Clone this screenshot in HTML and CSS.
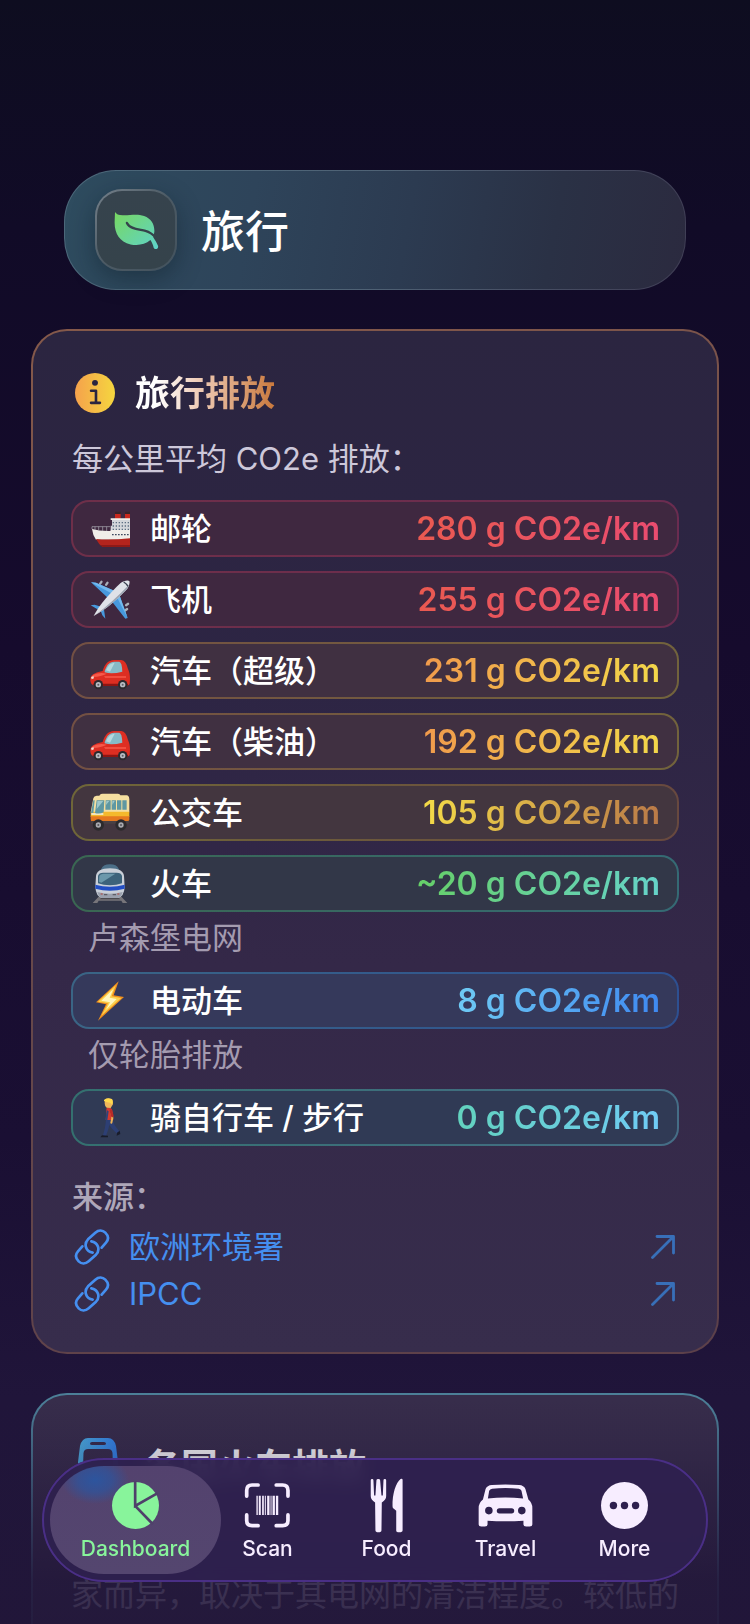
FILE: index.html
```html
<!DOCTYPE html>
<html lang="zh-CN">
<head>
<meta charset="utf-8">
<meta name="viewport" content="width=device-width, initial-scale=1">
<title>旅行</title>
<link rel="stylesheet" href="styles.css">
</head>
<body>
<div class="app">
  <main class="content">
    <header class="hero">
      <span class="hero-icon">
        <svg class="leaf" viewBox="190 183 136 118" aria-hidden="true">
          <defs><linearGradient id="leafFill" x1="0" y1="0" x2="1" y2="1"><stop offset="0" stop-color="#78d860"/><stop offset="1" stop-color="#5ed3cb"/></linearGradient></defs>
          <path fill="url(#leafFill)" d="M193 186C196 192 204 196 216 196C238 197 258 190 281 198C303 206 313 224 312 246L309 263C314 270 320 280 323 288C326 298 314 302 310 294C308 286 305 278 300 271C284 285 262 288 240 284C205 275 190 248 192 212Z"/>
          <path d="M229 219C238 238 266 238 285 243C300 247 308 254 317 264" fill="none" stroke="#35434b" stroke-width="7" stroke-linecap="round"/>
        </svg>
      </span>
      <h1 class="hero-title">旅行</h1>
    </header>

    <section class="card card-travel">
      <div class="card-head">
        <svg class="info" viewBox="165 158 122 122" aria-hidden="true">
          <defs><linearGradient id="infoFill"><stop offset="0" stop-color="#f5a24c"/><stop offset="1" stop-color="#f5d63f"/></linearGradient></defs>
          <circle cx="226" cy="219" r="61" fill="url(#infoFill)"/>
          <circle cx="226" cy="188" r="9" fill="#2b2540"/>
          <path d="M214 212H229V248M214 249H241" fill="none" stroke="#2b2540" stroke-width="8" stroke-linecap="round" stroke-linejoin="round"/>
        </svg>
        <h2 class="card-title title-warm">旅行排放</h2>
      </div>
      <p class="lead">每公里平均 CO2e 排放：</p>

      <ul class="rows">
        <li>
          <div class="row red">
            <svg class="emoji" viewBox="0 0 120 120" aria-hidden="true">
              <path fill="#c8281e" d="M75 14H92V34H75ZM105 14H120V34H105Z"/><path fill="#3a2428" d="M75 8H92V15H75ZM105 8H120V15H105Z"/>
              <path fill="#d3d6da" d="M66 30H121V70H62V50H66Z"/><path fill="#f0eee9" d="M62 28H121V33H62ZM6 60Q30 67 62 66V62H121V92H18Q8 78 6 60Z"/>
              <path fill="#b3241d" d="M18 90Q60 94 121 88V114H38Q26 106 18 90Z"/><path fill="#8d1a18" d="M30 108H121V114H38Z"/>
              <path stroke="#5d6f83" stroke-width="4" stroke-dasharray="4 5" d="M68 41H118M68 51H118M68 61H118"/><path stroke="#3f4c60" stroke-width="4" stroke-dasharray="5 4" d="M66 77H118"/>
              <path stroke="#aeb1b8" stroke-width="2" fill="none" d="M6 60V53H60M15 53V63M26 53V65M38 53V66M50 53V66"/>
            </svg>
            <span class="name">邮轮</span><span class="value">280 g CO2e/km</span>
          </div>
        </li>
        <li>
          <div class="row red">
            <svg class="emoji" viewBox="0 0 120 120" aria-hidden="true">
              <g fill="#a9b1ba"><rect x="29" y="1" width="7" height="14" rx="3" transform="rotate(35 32 8)"/><rect x="47" y="4" width="7" height="14" rx="3" transform="rotate(35 50 11)"/><rect x="108" y="66" width="7" height="14" rx="3" transform="rotate(55 111 73)"/><rect x="105" y="82" width="7" height="14" rx="3" transform="rotate(55 108 89)"/></g>
              <path fill="#4799dd" d="M3 7L18 8L76 34L58 58ZM113 114L106 116L64 62L88 44ZM2 76L14 74L38 82L30 92ZM46 116L37 106L32 92L41 82Z"/>
              <path fill="#72b9ee" d="M3 7L18 8L76 34L68 42ZM113 114L88 44L80 50Z"/>
              <path fill="#dfe2e8" d="M11 108C28 74 62 38 91 10C101 1 115 0 118 3C120 7 118 20 108 31C80 60 48 88 11 108Z"/>
              <path fill="#9da5b2" d="M11 108C48 82 88 44 117 14C115 21 113 26 108 31C80 60 48 88 11 108Z"/>
              <path fill="none" stroke="#3a4150" stroke-width="4" d="M101 6Q109 11 114 19"/>
            </svg>
            <span class="name">飞机</span><span class="value">255 g CO2e/km</span>
          </div>
        </li>
        <li>
          <div class="row orange">
            <svg class="emoji" viewBox="0 0 120 120" aria-hidden="true">
              <path fill="#dd2e22" d="M1 88C0 74 8 66 38 60C44 40 54 28 72 27H94Q108 28 114 54C120 66 121 80 119 98Q118 103 108 103H12Q2 101 1 88Z"/>
              <path fill="#86bac6" d="M44 60C50 42 58 33 72 32H88Q96 34 97 62Q66 70 44 64Z"/><path fill="#b5d9dd" d="M48 58C54 43 62 36 74 35L60 62Z"/>
              <path fill="#f7594a" d="M8 72Q30 62 50 68Q34 76 9 78ZM42 76H108V80H46Z"/><path fill="#8e1512" d="M8 98H114V105H14Z"/>
              <path fill="#f2ddd4" d="M3 78L10 75L12 82L5 85Z"/>
              <circle cx="25" cy="101" r="14" fill="#2b292d"/><circle cx="98" cy="101" r="14" fill="#2b292d"/><circle cx="25" cy="101" r="8" fill="#b9bcc2"/><circle cx="98" cy="101" r="8" fill="#b9bcc2"/><circle cx="25" cy="101" r="3" fill="#5c5e66"/><circle cx="98" cy="101" r="3" fill="#5c5e66"/>
            </svg>
            <span class="name">汽车（超级）</span><span class="value">231 g CO2e/km</span>
          </div>
        </li>
        <li>
          <div class="row orange">
            <svg class="emoji" viewBox="0 0 120 120" aria-hidden="true">
              <path fill="#dd2e22" d="M1 88C0 74 8 66 38 60C44 40 54 28 72 27H94Q108 28 114 54C120 66 121 80 119 98Q118 103 108 103H12Q2 101 1 88Z"/>
              <path fill="#86bac6" d="M44 60C50 42 58 33 72 32H88Q96 34 97 62Q66 70 44 64Z"/><path fill="#b5d9dd" d="M48 58C54 43 62 36 74 35L60 62Z"/>
              <path fill="#f7594a" d="M8 72Q30 62 50 68Q34 76 9 78ZM42 76H108V80H46Z"/><path fill="#8e1512" d="M8 98H114V105H14Z"/>
              <path fill="#f2ddd4" d="M3 78L10 75L12 82L5 85Z"/>
              <circle cx="25" cy="101" r="14" fill="#2b292d"/><circle cx="98" cy="101" r="14" fill="#2b292d"/><circle cx="25" cy="101" r="8" fill="#b9bcc2"/><circle cx="98" cy="101" r="8" fill="#b9bcc2"/><circle cx="25" cy="101" r="3" fill="#5c5e66"/><circle cx="98" cy="101" r="3" fill="#5c5e66"/>
            </svg>
            <span class="name">汽车（柴油）</span><span class="value">192 g CO2e/km</span>
          </div>
        </li>
        <li>
          <div class="row yellow">
            <svg class="emoji" viewBox="0 0 120 120" aria-hidden="true">
              <path fill="#f5dfa0" d="M30 5Q32 2 38 2H84Q90 2 91 7H110Q117 8 118 18V58H2L10 16Q12 9 20 8H28Z"/>
              <path fill="#f4b92c" d="M2 56H118V72H2Z"/><path fill="#e5791f" d="M2 70H118V80Q116 86 110 86H6Q2 84 2 78Z"/><path fill="#f3e6bd" d="M4 60H40V66H4Z"/>
              <path fill="#5f98a2" d="M10 22H14L10 60H3ZM20 22H43L41 58Q28 64 15 60ZM47 22H62V50H46ZM65 22H78V50H65ZM81 22H94V50H81ZM97 22H110V50H97Z"/>
              <path fill="#9ec7ca" d="M22 24H40L20 48ZM49 24H58L48 36ZM67 24H74L67 36Z"/>
              <path fill="#4a4144" d="M4 84H116V92H4Z"/>
              <circle cx="25" cy="96" r="17" fill="#2c2a2d"/><circle cx="93" cy="96" r="17" fill="#2c2a2d"/><circle cx="25" cy="96" r="8" fill="#a9a9ae"/><circle cx="93" cy="96" r="8" fill="#a9a9ae"/><circle cx="25" cy="96" r="3" fill="#55555c"/><circle cx="93" cy="96" r="3" fill="#55555c"/>
            </svg>
            <span class="name">公交车</span><span class="value">105 g CO2e/km</span>
          </div>
        </li>
        <li>
          <div class="row green">
            <svg class="emoji" viewBox="0 0 120 120" aria-hidden="true">
              <path fill="#77757a" d="M28 96H92L112 117H98L94 110H26L22 117H8Z"/><path fill="#4a494e" d="M34 100H86L90 106H30Z"/>
              <path fill="#4c6f88" d="M34 14Q40 1 60 1Q80 1 86 14L92 28H28Z"/><path fill="#c9cfd8" d="M18 36Q20 14 60 13Q100 14 102 36L104 70Q102 98 84 102H36Q18 98 16 70Z"/>
              <path fill="#3d637b" d="M24 36Q26 26 40 26H80Q94 26 96 36V58Q80 64 60 64Q40 64 24 58Z"/><path fill="#6c98ab" d="M28 36Q30 30 40 29H76L34 56L27 53Z"/>
              <path fill="#234fc4" d="M16 62Q60 74 104 62V74Q60 86 16 74Z"/><path fill="#9aa0ad" d="M22 84Q60 94 98 84Q94 100 84 102H36Q26 100 22 84Z"/>
              <path stroke="#5e5d66" stroke-width="4" d="M42 92H52M68 92H78"/><path stroke="#b5423a" stroke-width="3" d="M32 90H38M82 90H88"/>
            </svg>
            <span class="name">火车</span><span class="value">~20 g CO2e/km</span>
          </div>
          <p class="note">卢森堡电网</p>
        </li>
        <li>
          <div class="row blue">
            <svg class="emoji" viewBox="0 0 120 120" aria-hidden="true">
              <path fill="#f08f1c" d="M86 1L18 64L48 70L24 119L102 48L71 43Z"/><path fill="#fbd24e" d="M78 12L24 62L54 67L34 104L94 51L65 46Z"/><path fill="#fff6bd" d="M70 24L34 59L60 64L48 86L80 54L59 50Z"/>
            </svg>
            <span class="name">电动车</span><span class="value">8 g CO2e/km</span>
          </div>
          <p class="note">仅轮胎排放</p>
        </li>
        <li>
          <div class="row teal">
            <svg class="emoji" viewBox="0 0 120 120" aria-hidden="true">
              <path fill="#2d3f74" d="M48 66L68 64C70 78 76 86 90 102L82 108C70 96 62 88 58 80C56 94 50 106 48 114L38 113C44 98 46 84 48 66Z"/>
              <path fill="#191c2a" d="M81 104L89 98L91 108L80 113ZM36 112L54 113V118H31Z"/>
              <path fill="#d33a30" d="M50 30Q60 26 66 34L70 66H47Q50 50 48 40Z"/><path fill="#2f4378" d="M50 36L46 66L52 67L56 40Z"/>
              <path fill="#f0b75a" d="M44 5Q52 -2 66 4Q70 10 68 20L62 30L50 29Q44 24 44 16Z"/><path fill="#ffd94d" d="M42 6Q50 -3 66 3Q70 10 67 20L60 14Q52 14 42 9Z"/>
              <path stroke="#eeb254" stroke-width="6" stroke-linecap="round" fill="none" d="M65 46L67 60L64 74"/><path stroke="#b92a27" stroke-width="8" stroke-linecap="round" fill="none" d="M63 38L67 54"/>
            </svg>
            <span class="name">骑自行车 / 步行</span><span class="value">0 g CO2e/km</span>
          </div>
        </li>
      </ul>

      <h3 class="sources-title">来源：</h3>
      <ul class="links">
        <li><a class="link" href="#eea">
          <svg class="chain" viewBox="162 208 108 108" aria-hidden="true"><path d="M218 279C198 276 190 254 204 239L226 219C236 210 248 211 256 219C266 229 266 240 258 249L245 264M214 245C234 248 242 270 228 285L206 305C196 314 184 313 176 305C166 295 166 284 174 275L187 260"/></svg>
          <span>欧洲环境署</span>
          <svg class="arrow" viewBox="0 0 24 24" aria-hidden="true"><path d="M1.500 22.500L22 2M6 1.500H22.500V18"/></svg>
        </a></li>
        <li><a class="link" href="#ipcc">
          <svg class="chain" viewBox="162 208 108 108" aria-hidden="true"><path d="M218 279C198 276 190 254 204 239L226 219C236 210 248 211 256 219C266 229 266 240 258 249L245 264M214 245C234 248 242 270 228 285L206 305C196 314 184 313 176 305C166 295 166 284 174 275L187 260"/></svg>
          <span>IPCC</span>
          <svg class="arrow" viewBox="0 0 24 24" aria-hidden="true"><path d="M1.500 22.500L22 2M6 1.500H22.500V18"/></svg>
        </a></li>
      </ul>
    </section>

    <section class="card card-train">
      <div class="card-head head-large">
        <svg class="train" viewBox="0 0 40 56" aria-hidden="true">
          <defs><linearGradient id="trainFill"><stop offset="0" stop-color="#4db4e6"/><stop offset="1" stop-color="#3183ee"/></linearGradient></defs>
          <path fill="url(#trainFill)" fill-rule="evenodd" d="M10 0H30Q36 0 38 8L40 24V40Q40 48 32 48H8Q0 48 0 40V24L2 8Q4 0 10 0ZM14 4Q12 4 12 5.500T14 7H26Q28 7 28 5.500T26 4ZM10 11Q6 11 5.500 15L5 28Q5 31 9 31H31Q35 31 35 28L34.500 15Q34 11 30 11Z"/>
        </svg>
        <h2 class="card-title title-large">各国火车排放</h2>
      </div>
      <p class="body">家而异，取决于其电网的清洁程度。较低的</p>
    </section>
  </main>

  <div class="fade"></div>

  <nav class="tabs" aria-label="Main">
    <button class="tab active" type="button">
      <svg viewBox="273 305 146 146" aria-hidden="true"><circle cx="346" cy="378" r="70" fill="currentColor"/><path d="M345 300V379L412 341M345 379L398 434" fill="none" stroke="#4f406a" stroke-width="8"/></svg>
      <span>Dashboard</span>
    </button>
    <button class="tab" type="button">
      <svg viewBox="669 305 146 146" aria-hidden="true">
        <path d="M680 350V333Q680 317 696 317H714M768 317H787Q803 317 803 333V350M803 406V423Q803 438 787 438H768M714 438H696Q680 438 680 423V406" fill="none" stroke="currentColor" stroke-width="11" stroke-linecap="round"/>
        <path fill="currentColor" d="M709 349H713V406H709ZM716 349H722V406H716ZM726 349H731V406H726ZM734 349H737V406H734ZM741 349H748V406H741ZM751 349H754V406H751ZM757 349H764V406H757ZM767 349H774V406H767Z"/>
      </svg>
      <span>Scan</span>
    </button>
    <button class="tab" type="button">
      <svg class="food" viewBox="-33 290 162 164" aria-hidden="true">
        <path fill="currentColor" d="M1 297Q1 293 5 293T9 297L11 342H15L18 297Q18 293 23.500 293T29 297L33 342H37L39 297Q39 293 43 293T47 297V344Q47 356 34 363L33 446Q33 452 24 452T15 446L14 363Q1 356 1 344Z"/>
        <path fill="currentColor" d="M96 296V446Q96 452 86 452T77 446V388L70 382Q66 380 66 374C65 338 76 303 90 293Q96 291 96 296Z"/>
      </svg>
      <span>Food</span>
    </button>
    <button class="tab" type="button">
      <svg class="car" viewBox="323 305 167 146" aria-hidden="true">
        <path fill="currentColor" fill-rule="evenodd" d="M365 316Q406 312 448 316Q462 317 467 328L476 360Q488 370 488 386V436Q488 442 480 442H469Q461 442 461 436V424Q406 428 352 424V436Q352 442 344 442H333Q325 442 325 436V386Q325 370 338 360L346 328Q351 317 365 316ZM366 327Q359 328 357 333L353 357Q406 351 460 357L455 333Q453 328 447 327Q406 323 366 327ZM356 382A11 11 0 1 0 356 405A11 11 0 1 0 356 382ZM456 382A11 11 0 1 0 456 405A11 11 0 1 0 456 382ZM388 386A8 8 0 0 0 388 402H425A8 8 0 0 0 425 386Z"/>
      </svg>
      <span>Travel</span>
    </button>
    <button class="tab" type="button">
      <svg viewBox="693 305 146 146" aria-hidden="true"><circle cx="766" cy="378" r="70" fill="currentColor"/><g fill="#2e204e"><circle cx="733" cy="378" r="11"/><circle cx="766" cy="378" r="11"/><circle cx="799" cy="378" r="11"/></g></svg>
      <span>More</span>
    </button>
  </nav>
</div>
</body>
</html>
```
FILE: styles.css
```css
* { box-sizing: border-box; }

body {
  margin: 0;
  font-family: Inter, "Noto Sans CJK SC", sans-serif;
  font-size: 31px;
  line-height: 40px;
  color: #fff;
}

h1, h2, h3, p, ul { margin: 0; padding: 0; }
ul { list-style: none; }

.app {
  position: relative;
  height: 100vh;
  overflow: hidden;
  background: linear-gradient(#0e0d20 0%, #110b27 14%, #160b2d 40%, #1a0f33 70%, #20153a 86%, #20153a 100%);
}

.content {
  height: 100%;
  overflow-y: auto;
  scrollbar-width: none;
  padding: 170px 31px 0;
}

.hero {
  display: flex;
  align-items: center;
  gap: 24px;
  height: 120px;
  margin: 0 33px;
  padding-left: 30px;
  border: 1px solid transparent;
  border-radius: 52px;
  background:
    linear-gradient(100deg, #2e4c5f 0%, #2e445a 30%, #2c3b51 55%, #2a3145 78%, #2b2a3f 100%) padding-box,
    linear-gradient(100deg, #4b687a 0%, #4f6275 50%, #3f3d54 100%) border-box;
}

.hero-icon {
  display: grid;
  place-items: center;
  width: 82px;
  height: 82px;
  border: 2px solid transparent;
  border-radius: 27px;
  background:
    linear-gradient(#36434d, #35434b) padding-box,
    linear-gradient(135deg, #75808a, #4c5a64 50%, #43525d) border-box;
  box-shadow: 0 8px 24px rgba(10, 25, 35, .4);
}

.leaf { width: 45px; height: 39px; }

.hero-title {
  padding-top: 4px;
  font-size: 44px;
  line-height: 64px;
  font-weight: 500;
}

.card {
  padding: 40px 38px 38px;
  margin-top: 39px;
  border: 2px solid transparent;
  border-radius: 36px;
}

.card-travel {
  background:
    linear-gradient(#2b2540 0%, #2d2544 35%, #342848 62%, #372d4c 100%) padding-box,
    linear-gradient(165deg, #85594a, #6b4b4a 40%, #5c404a) border-box;
}

.card-train {
  min-height: 480px;
  background:
    linear-gradient(#372d4b, #35294a) padding-box,
    linear-gradient(#4c8098 0%, #466f8a 20%, #3f4a68 60%) border-box;
}

.card-head {
  display: flex;
  align-items: center;
  gap: 20px;
  height: 44px;
  padding-left: 4px;
}

.head-large {
  height: 62px;
  padding-left: 7px;
  gap: 26px;
}

.info { width: 40px; height: 40px; }
.train { width: 40px; height: 56px; }

.card-title {
  font-size: 35px;
  line-height: 44px;
  font-weight: 700;
}

.title-warm {
  color: transparent;
  background: linear-gradient(90deg, #fff 15%, #efcdb8 45%, #c9783c 100%);
  -webkit-background-clip: text;
  background-clip: text;
}

.title-large { padding-top: 4px; font-size: 37px; line-height: 48px; }

.lead {
  margin-top: 24px;
  padding-left: 1px;
  color: #cdc8da;
}

.rows {
  display: grid;
  gap: 14px;
  margin-top: 21px;
}

.row {
  display: flex;
  align-items: center;
  gap: 20px;
  height: 57px;
  padding: 0 17px;
  border: 2px solid transparent;
  border-radius: 18px;
  background:
    linear-gradient(var(--fill), var(--fill)) padding-box,
    linear-gradient(90deg, var(--edge-a), var(--edge-b)) border-box;
}

.emoji { width: 40px; height: 40px; flex: none; }
.name { font-weight: 500; }

.value {
  margin-left: auto;
  font-size: 32px;
  font-weight: 600;
  color: transparent;
  background: linear-gradient(100deg, var(--text-a), var(--text-b));
  -webkit-background-clip: text;
  background-clip: text;
}

.red { --fill: #3f2840; --edge-a: #6e2f49; --edge-b: #6b2c50; --text-a: #ea5a50; --text-b: #ea4c70; }
.orange { --fill: #403041; --edge-a: #735043; --edge-b: #72633c; --text-a: #f09a4c; --text-b: #f3d84a; }
.yellow { --fill: #43363f; --edge-a: #6f6638; --edge-b: #68493f; --text-a: #f5dc48; --text-b: #b97848; }
.green { --fill: #323748; --edge-a: #3a6752; --edge-b: #356a74; --text-a: #66cf66; --text-b: #66d3ca; }
.blue { --fill: #35395b; --edge-a: #3a6585; --edge-b: #2d5091; --text-a: #6fcbf4; --text-b: #3e88f0; }
.teal { --fill: #303a55; --edge-a: #34706f; --edge-b: #456d86; --text-a: #62d2bd; --text-b: #70cbf6; }

.note {
  padding: 6px 0 0 17px;
  color: #a49bb0;
}

.sources-title {
  margin-top: 31px;
  padding-left: 1px;
  font-size: 31px;
  line-height: 40px;
  font-weight: 500;
  color: #aea7b9;
}

.links {
  display: grid;
  gap: 7px;
  margin-top: 10px;
}

.link {
  display: flex;
  align-items: center;
  gap: 19px;
  padding: 0 4px 0 3px;
  color: #458ff0;
  text-decoration: none;
}

.chain, .arrow {
  fill: none;
  stroke: currentColor;
  stroke-linecap: round;
  stroke-linejoin: round;
}

.chain { width: 36px; height: 36px; stroke-width: 8; }
.arrow { width: 24px; height: 24px; margin-left: auto; stroke-width: 2.8; color: #386fb8; }

.body {
  margin-top: 78px;
  font-size: 32px;
  color: #cdc8da;
  white-space: nowrap;
}

.fade {
  position: absolute;
  inset: auto 0 0;
  height: 224px;
  pointer-events: none;
  background: linear-gradient(rgba(33, 22, 57, 0), rgba(33, 22, 57, .25) 26%, rgba(33, 22, 57, .84) 80%, rgba(33, 22, 57, .88));
}

.tabs {
  position: absolute;
  inset: auto 42px 42px;
  display: flex;
  height: 124px;
  padding: 6px;
  border: 2px solid transparent;
  border-radius: 62px;
  background: rgba(46, 32, 79, .93);
  backdrop-filter: blur(8px);
}

.tabs::before {
  content: "";
  position: absolute;
  inset: -2px;
  border: 2px solid #4a2f86;
  border-radius: inherit;
  pointer-events: none;
}

.tab {
  flex: 0 1 119px;
  display: flex;
  flex-direction: column;
  align-items: center;
  gap: 6px;
  padding: 15px 0 0;
  border: 0;
  background: none;
  color: #f7edff;
  font: 500 21px/26px Inter, sans-serif;
}

.tab svg { width: 49px; height: 49px; }
.tab .food { width: 55px; height: 55px; margin: -3px 0; }
.tab .car { width: 55px; }

.active {
  flex-basis: 171px;
  margin-right: -13px;
  border-radius: 54px;
  color: #88f49b;
  background:
    radial-gradient(ellipse 34px 24px at 45px 14px, rgba(38, 88, 166, .85), rgba(38, 88, 166, .6) 50%, rgba(38, 88, 166, 0)),
    linear-gradient(#53426e, #54466f);
}
```
